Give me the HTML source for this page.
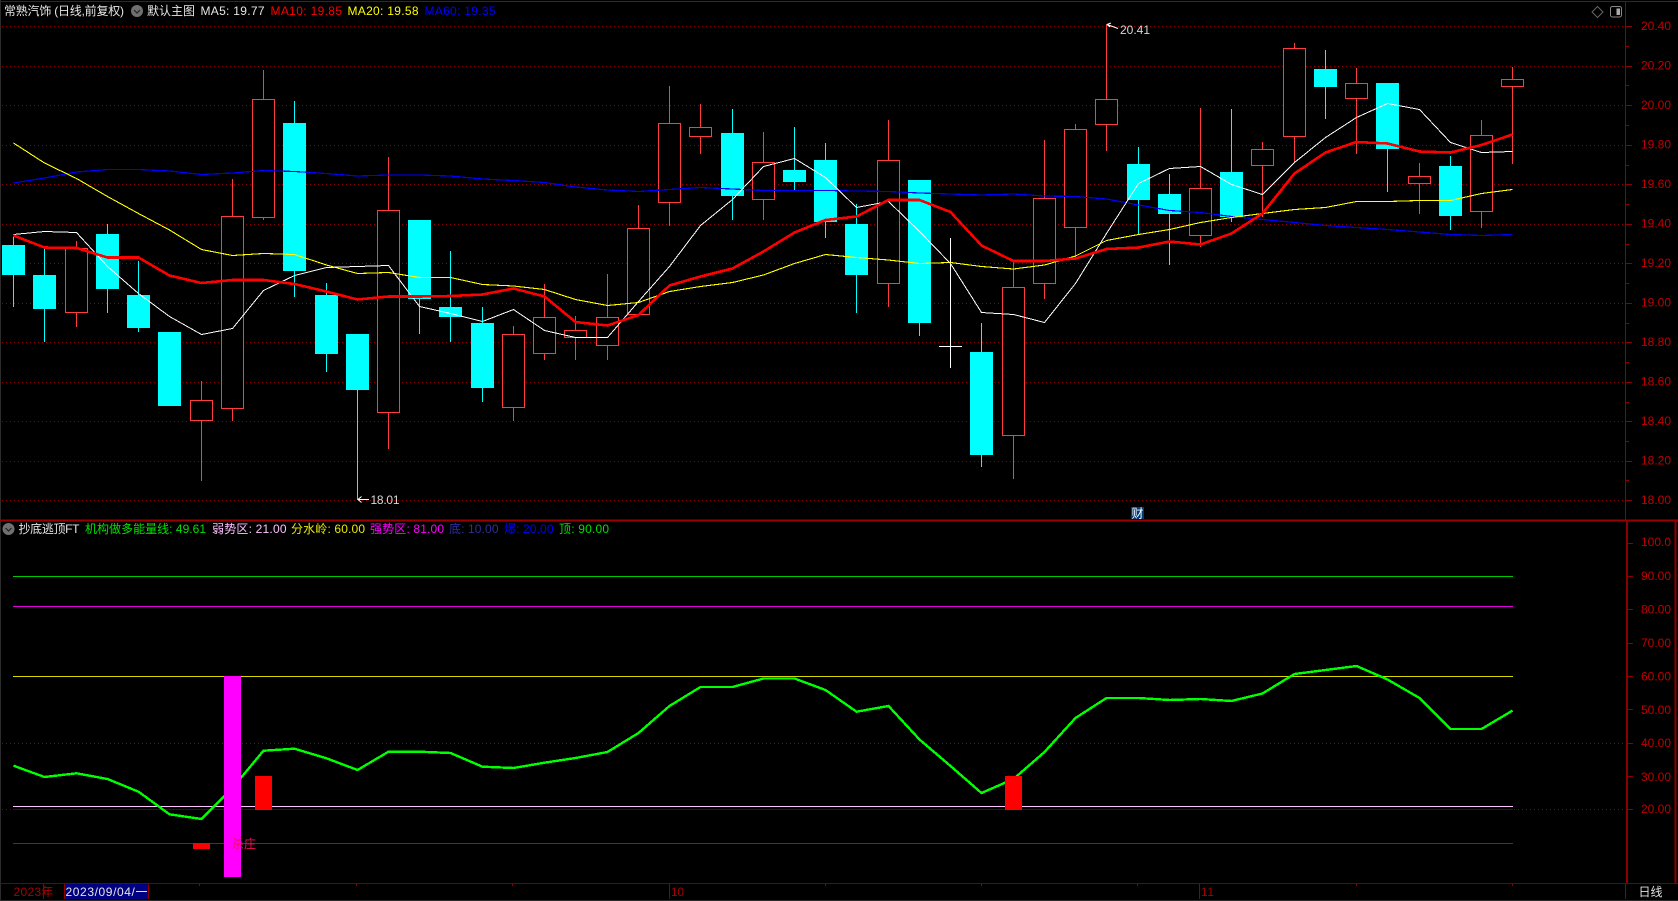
<!DOCTYPE html>
<html><head><meta charset="utf-8"><title>K线</title>
<style>
html,body{margin:0;padding:0;background:#000;width:1678px;height:901px;overflow:hidden}
svg{display:block;position:absolute;left:0;top:0}
text{font-family:"Liberation Sans","Noto Sans CJK SC",sans-serif;font-size:12px}
</style></head><body>
<svg width="1678" height="901" viewBox="0 0 1678 901" xmlns="http://www.w3.org/2000/svg">
<rect width="1678" height="901" fill="#000"/>
<g shape-rendering="crispEdges">
<!-- frame -->
<path d="M0 1.5H1678M0 900.5H1678M.5 0V901" stroke="#2b2b2b" fill="none"/>
<!-- dotted grid -->
<path d="M2 26.5H1625M2 66.5H1625M2 105.5H1625M2 145.5H1625M2 184.5H1625M2 224.5H1625M2 263.5H1625M2 303.5H1625M2 342.5H1625M2 382.5H1625M2 421.5H1625M2 461.5H1625M2 500.5H1625M2 743.5H1625M2 809.5H1625" stroke="#8f0000" stroke-dasharray="1 3" fill="none"/>

<!-- wicks red -->
<path stroke="#ff3c3c" fill="none" d="M76.5 241V327M201.5 381V481M232.5 179V421M263.5 70V220M388.5 157V449M513.5 326V421M544.5 284V360M575.5 316V360M607.5 274V360M638.5 205V314M669.5 86V226M700.5 104V154M763.5 132V220M888.5 120V307M1013.5 262V479M1044.5 140V299M1075.5 124V257M1106.5 24V151M1200.5 108V247M1262.5 142V217M1294.5 43V163M1356.5 68V154M1419.5 163V214M1481.5 120V228M1512.5 67V164"/>
<!-- wicks cyan -->
<path stroke="#00ffff" fill="none" d="M13.5 237V307M44.5 248V342M107.5 224V313M138.5 261V332M294.5 101V297M326.5 283V372M357.5 334V500M419.5 220V334M450.5 251V342M482.5 307V402M732.5 109V220M794.5 127V190M825.5 143V238M856.5 204V313M919.5 180V336M981.5 323V467M1138.5 147V234M1169.5 174V265M1231.5 109V222M1325.5 50V119M1387.5 83V192M1450.5 156V230"/>
<!-- doji -->
<path stroke="#fff" fill="none" d="M950.5 238V368M939 346.5H962"/>

<!-- red bodies -->
<g fill="#000" stroke="#ff3c3c">
<rect x="65.5" y="248.5" width="22" height="64"/>
<rect x="190.5" y="400.5" width="22" height="20"/>
<rect x="221.5" y="216.5" width="22" height="192"/>
<rect x="252.5" y="99.5" width="22" height="118"/>
<rect x="377.5" y="210.5" width="22" height="202"/>
<rect x="502.5" y="334.5" width="22" height="73"/>
<rect x="533.5" y="317.5" width="22" height="36"/>
<rect x="564.5" y="330.5" width="22" height="7"/>
<rect x="596.5" y="317.5" width="22" height="28"/>
<rect x="627.5" y="228.5" width="22" height="86"/>
<rect x="658.5" y="123.5" width="22" height="79"/>
<rect x="689.5" y="127.5" width="22" height="9"/>
<rect x="752.5" y="162.5" width="22" height="37"/>
<rect x="877.5" y="160.5" width="22" height="123"/>
<rect x="1002.5" y="287.5" width="22" height="148"/>
<rect x="1033.5" y="198.5" width="22" height="85"/>
<rect x="1064.5" y="129.5" width="22" height="98"/>
<rect x="1095.5" y="99.5" width="22" height="25"/>
<rect x="1189.5" y="188.5" width="22" height="47"/>
<rect x="1251.5" y="149.5" width="22" height="16"/>
<rect x="1283.5" y="48.5" width="22" height="88"/>
<rect x="1345.5" y="83.5" width="22" height="15"/>
<rect x="1408.5" y="176.5" width="22" height="7"/>
<rect x="1470.5" y="135.5" width="22" height="76"/>
<rect x="1501.5" y="79.5" width="22" height="7"/>
</g>
<!-- cyan bodies -->
<g fill="#00ffff">
<rect x="2" y="245" width="23" height="30"/>
<rect x="33" y="275" width="23" height="34"/>
<rect x="96" y="234" width="23" height="55"/>
<rect x="127" y="295" width="23" height="33"/>
<rect x="158" y="332" width="23" height="74"/>
<rect x="283" y="123" width="23" height="148"/>
<rect x="315" y="295" width="23" height="59"/>
<rect x="346" y="334" width="23" height="56"/>
<rect x="408" y="220" width="23" height="79"/>
<rect x="439" y="307" width="23" height="10"/>
<rect x="471" y="323" width="23" height="65"/>
<rect x="721" y="133" width="23" height="63"/>
<rect x="783" y="170" width="23" height="12"/>
<rect x="814" y="160" width="23" height="62"/>
<rect x="845" y="224" width="23" height="51"/>
<rect x="908" y="180" width="23" height="143"/>
<rect x="970" y="352" width="23" height="103"/>
<rect x="1127" y="164" width="23" height="36"/>
<rect x="1158" y="194" width="23" height="20"/>
<rect x="1220" y="172" width="23" height="45"/>
<rect x="1314" y="69" width="23" height="18"/>
<rect x="1376" y="83" width="23" height="66"/>
<rect x="1439" y="166" width="23" height="50"/>
</g>

<!-- MA60 -->
<polyline fill="none" stroke="#0000ff" stroke-width="1.2" points="13.5,183 44.5,178 76.5,172 107.5,169.5 138.5,169.5 169.5,171 201.5,174.5 232.5,173 263.5,170.5 294.5,171.5 326.5,173.5 357.5,176 388.5,175 419.5,175 450.5,176 482.5,179 513.5,180.5 544.5,182.5 575.5,187 607.5,190 638.5,191.5 669.5,189.5 700.5,187.5 732.5,189 763.5,190.5 794.5,190.5 825.5,190.5 856.5,191 888.5,191.5 919.5,193 950.5,194 981.5,195 1013.5,194 1044.5,196 1075.5,196.5 1106.5,199 1138.5,205 1169.5,210.5 1200.5,212.5 1231.5,216.5 1262.5,219.5 1294.5,222.5 1325.5,225.5 1356.5,227.5 1387.5,229.5 1419.5,232 1450.5,234.5 1481.5,235.5 1512.5,234.5"/>
<!-- MA20 -->
<polyline fill="none" stroke="#ffff00" stroke-width="1.1" points="13.5,143 44.5,163 76.5,178.5 107.5,196.5 138.5,213.5 169.5,230 201.5,249.5 232.5,255.5 263.5,253.5 294.5,254.5 326.5,265 357.5,273.5 388.5,272.5 419.5,277.5 450.5,277.5 482.5,284.5 513.5,286 544.5,289.5 575.5,299.5 607.5,305.5 638.5,302.5 669.5,291.5 700.5,286.5 732.5,282.5 763.5,275 794.5,263.5 825.5,254.5 856.5,257.5 888.5,260 919.5,263.5 950.5,262.5 981.5,266.5 1013.5,269 1044.5,265 1075.5,256 1106.5,240.5 1138.5,234.5 1169.5,229.5 1200.5,222.5 1231.5,217.5 1262.5,213.5 1294.5,209.5 1325.5,207.5 1356.5,201.5 1387.5,201.5 1419.5,200.5 1450.5,200.5 1481.5,193.5 1512.5,189.5"/>
<!-- MA5 -->
<polyline fill="none" stroke="#ffffff" stroke-width="1" points="13.5,234.5 44.5,231.5 76.5,232.5 107.5,266.5 138.5,293.5 169.5,316.5 201.5,334.5 232.5,328.5 263.5,290.5 294.5,275.5 326.5,267.5 357.5,266.5 388.5,265.5 419.5,306.5 450.5,313.5 482.5,321.5 513.5,309.5 544.5,330.5 575.5,337.5 607.5,337.5 638.5,301.5 669.5,266.5 700.5,225.5 732.5,199.5 763.5,166.5 794.5,158.5 825.5,177.5 856.5,207.5 888.5,201.5 919.5,231.5 950.5,263.5 981.5,312.5 1013.5,314.5 1044.5,322.5 1075.5,283.5 1106.5,233.5 1138.5,183.5 1169.5,168.5 1200.5,166.5 1231.5,184.5 1262.5,194.5 1294.5,162.5 1325.5,137.5 1356.5,117.5 1387.5,103.5 1419.5,109.5 1450.5,142.5 1481.5,152.5 1512.5,151.5"/>
<!-- MA10 -->
<polyline fill="none" stroke="#ff0000" stroke-width="2.6" points="13.5,235.5 44.5,247.5 76.5,248 107.5,257.5 138.5,257.5 169.5,275.5 201.5,283 232.5,280 263.5,280 294.5,284 326.5,291.5 357.5,299.5 388.5,296.5 419.5,296.5 450.5,296 482.5,294.5 513.5,288.5 544.5,296.5 575.5,322 607.5,325.5 638.5,315 669.5,285.5 700.5,276.5 732.5,268.5 763.5,251.5 794.5,232.5 825.5,220 856.5,216.5 888.5,200 919.5,200 950.5,212 981.5,245.5 1013.5,261 1044.5,261 1075.5,258.5 1106.5,249 1138.5,247.5 1169.5,241.5 1200.5,244.5 1231.5,233.5 1262.5,213.5 1294.5,173.5 1325.5,152.5 1356.5,142 1387.5,143.5 1419.5,151.5 1450.5,152.5 1481.5,145 1512.5,134.5"/>

<!-- divider and axes -->
<path d="M0 520.5H1678" stroke="#9a0000" stroke-width="2" fill="none"/>
<path d="M1625.5 2V520" stroke="#8b0000" fill="none"/>
<path d="M1627 520V884M1675.5 520V884" stroke="#8b0000" stroke-width="2" fill="none"/>
<path d="M1626 26.5H1632M1626 66.5H1632M1626 105.5H1632M1626 145.5H1632M1626 184.5H1632M1626 224.5H1632M1626 263.5H1632M1626 303.5H1632M1626 342.5H1632M1626 382.5H1632M1626 421.5H1632M1626 461.5H1632M1626 500.5H1632M1626 46.5H1629M1626 85.5H1629M1626 125.5H1629M1626 165.5H1629M1626 204.5H1629M1626 244.5H1629M1626 283.5H1629M1626 323.5H1629M1626 362.5H1629M1626 402.5H1629M1626 441.5H1629M1626 480.5H1629M1627 543.5H1633M1627 576.5H1633M1627 609.5H1633M1627 643.5H1633M1627 676.5H1633M1627 709.5H1633M1627 743.5H1633M1627 776.5H1633M1627 809.5H1633" stroke="#8b0000" fill="none"/>

<!-- lower pane lines -->
<path d="M13 576.5H1513" stroke="#00c800" fill="none"/>
<path d="M13 606.5H1513" stroke="#e000e0" fill="none"/>
<path d="M13 676.5H1513" stroke="#d8d800" fill="none"/>
<path d="M13 806.5H1513" stroke="#ffc0ff" fill="none"/>
<path d="M13 809.5H1513" stroke="#0000ff" stroke-width="1.4" fill="none"/>
<path d="M13 843.5H1513" stroke="#2e2e9e" fill="none"/>
<polyline fill="none" stroke="#00ff00" stroke-width="2.4" points="13.5,765.7 44.5,777 76.5,773.3 107.5,779 138.5,791.7 169.5,814.3 201.5,819 232.5,788 263.5,750.7 294.5,748.7 326.5,758.3 357.5,770 388.5,751.7 419.5,751.7 450.5,753 482.5,766.7 513.5,768 544.5,762.7 575.5,758 607.5,752 638.5,733 669.5,706 700.5,687 732.5,687 763.5,678.5 794.5,678.5 825.5,690 856.5,711.7 888.5,706 919.5,739.5 950.5,766 981.5,793 1013.5,779 1044.5,752 1075.5,718 1106.5,698 1138.5,698 1169.5,700 1200.5,699 1231.5,701 1262.5,693.5 1294.5,674 1325.5,670 1356.5,666 1387.5,679.5 1419.5,698 1450.5,729 1481.5,729 1512.5,710.6"/>
<rect x="224" y="676" width="17" height="201" fill="#ff00ff"/>
<rect x="255" y="776" width="17" height="34" fill="#ff0000"/>
<rect x="1005" y="776" width="17" height="34" fill="#ff0000"/>
<rect x="193" y="843" width="17" height="6" fill="#ff0000"/>

<!-- bottom axis -->
<path d="M0 883.5H1678" stroke="#7a0000" fill="none"/>
<path d="M43.5 884V899M669.5 884V899M1199.5 884V899M1625.5 884V899M199.5 884V886M356.5 884V886M512.5 884V886M825.5 884V886M981.5 884V886M1137.5 884V886M1356.5 884V886M1512.5 884V886" stroke="#8b0000" fill="none"/>
<rect x="64" y="884" width="85" height="15" fill="#000080"/>
<path d="M64.5 884V899M148.5 884V899" stroke="#8b0000" fill="none"/>
<rect x="1131" y="507" width="13" height="12" fill="#003a78"/>
</g>

<!-- header text -->
<text x="4" y="15" fill="#e6e6e6" textLength="120">常熟汽饰 (日线,前复权)</text>
<circle cx="137" cy="11" r="6" fill="#707070"/><path d="M134 10l3 3 3-3" fill="none" stroke="#222" stroke-width="1.2"/>
<text x="147" y="15" fill="#e6e6e6" textLength="48">默认主图</text>
<text x="200.5" y="15" fill="#e6e6e6" textLength="64">MA5: 19.77</text>
<text x="270.5" y="15" fill="#ff0000" textLength="71.5">MA10: 19.85</text>
<text x="347.5" y="15" fill="#ffff00" textLength="71">MA20: 19.58</text>
<text x="424.5" y="15" fill="#0000ff" textLength="71">MA60: 19.35</text>

<!-- top right icons -->
<path d="M1597.5 6.5l5.5 5.5-5.5 5.5-5.5-5.5z" fill="none" stroke="#666"/>
<rect x="1610.5" y="6.5" width="11" height="10.5" rx="2" fill="none" stroke="#888"/>
<rect x="1616.5" y="8.5" width="3.5" height="6.5" fill="#aaa"/>

<!-- extreme labels -->
<path d="M1107 24.5l4 -1.5M1107 24.5l3 2.5M1107 24.5l11 4" stroke="#fff" fill="none"/>
<text x="1120" y="34" fill="#d8d8d8" textLength="30">20.41</text>
<path d="M358 499.5H369M358 499.5l3.5-3M358 499.5l3.5 3" stroke="#fff" fill="none"/>
<text x="370.5" y="504" fill="#d8d8d8" textLength="29">18.01</text>
<text x="1131.5" y="517.5" fill="#fff" textLength="12">财</text>

<!-- price labels -->
<g fill="#c00000">
<text x="1641" y="30" textLength="30">20.40</text>
<text x="1641" y="69.5" textLength="30">20.20</text>
<text x="1641" y="109" textLength="30">20.00</text>
<text x="1641" y="148.5" textLength="30">19.80</text>
<text x="1641" y="188" textLength="30">19.60</text>
<text x="1641" y="227.5" textLength="30">19.40</text>
<text x="1641" y="267" textLength="30">19.20</text>
<text x="1641" y="306.5" textLength="30">19.00</text>
<text x="1641" y="346" textLength="30">18.80</text>
<text x="1641" y="385.5" textLength="30">18.60</text>
<text x="1641" y="425" textLength="30">18.40</text>
<text x="1641" y="464.5" textLength="30">18.20</text>
<text x="1641" y="504" textLength="30">18.00</text>
<text x="1641" y="546" textLength="30">100.0</text>
<text x="1641" y="580" textLength="30">90.00</text>
<text x="1641" y="613.5" textLength="30">80.00</text>
<text x="1641" y="647" textLength="30">70.00</text>
<text x="1641" y="680.5" textLength="30">60.00</text>
<text x="1641" y="714" textLength="30">50.00</text>
<text x="1641" y="747" textLength="30">40.00</text>
<text x="1641" y="781" textLength="30">30.00</text>
<text x="1641" y="813" textLength="30">20.00</text>
</g>

<!-- lower legend -->
<circle cx="8.5" cy="529" r="6" fill="#707070"/><path d="M5.5 528l3 3 3-3" fill="none" stroke="#222" stroke-width="1.2"/>
<text x="18.5" y="533" fill="#e6e6e6" textLength="61">抄底逃顶FT</text>
<text x="85" y="533" fill="#00e000" textLength="121">机构做多能量线: 49.61</text>
<text x="212" y="533" fill="#ffc0ff" textLength="74.5">弱势区: 21.00</text>
<text x="291" y="533" fill="#e8e800" textLength="74">分水岭: 60.00</text>
<text x="370" y="533" fill="#ff00ff" textLength="74">强势区: 81.00</text>
<text x="449" y="533" fill="#2e2e9e" textLength="49.5">底: 10.00</text>
<text x="504" y="533" fill="#0000ff" textLength="49.5">爆: 20.00</text>
<text x="559" y="533" fill="#00e000" textLength="50">顶: 90.00</text>

<text x="232" y="848" fill="#f0105a" textLength="24">杀庄</text>

<!-- bottom labels -->
<text x="13.5" y="896" fill="#a80000" textLength="40">2023年</text>
<text x="65.5" y="896" fill="#e6e6e6" textLength="82">2023/09/04/一</text>
<text x="671" y="896" fill="#a80000" textLength="13">10</text>
<text x="1201" y="896" fill="#a80000" textLength="13">11</text>
<text x="1638.5" y="896" fill="#e0e0e0" textLength="24">日线</text>
</svg>
</body></html>
